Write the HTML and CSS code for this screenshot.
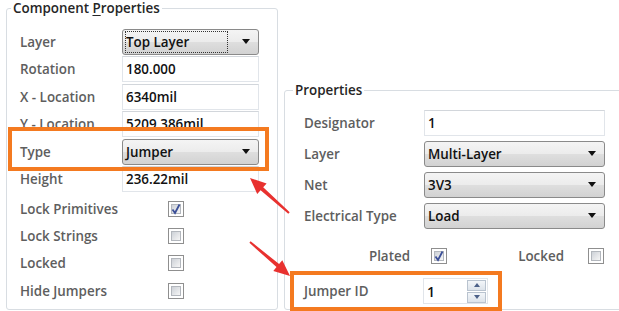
FILE: index.html
```html
<!DOCTYPE html>
<html lang="en">
<head>
    <meta charset="UTF-8">
    <title>Component Properties</title>
    <link rel="stylesheet" href="styles.css">
</head>
<body>
    <div class="page">
        <div class="left">
            <div class="group group-left">
                <div class="legend">Component <u>P</u>roperties</div>
                <div class="row">
                    <span class="label">Layer</span>
                    <div class="combo"><span class="focus">Top Layer</span><span class="caret"></span></div>
                </div>
                <div class="row">
                    <span class="label">Rotation</span>
                    <div class="field">180.000</div>
                </div>
                <div class="row">
                    <span class="label">X - Location</span>
                    <div class="field">6340mil</div>
                </div>
                <div class="row">
                    <span class="label">Y - Location</span>
                    <div class="field">5209.386mil</div>
                </div>
                <div class="row">
                    <span class="label">Type</span>
                    <div class="combo"><span>Jumper</span><span class="caret"></span></div>
                </div>
                <div class="row">
                    <span class="label">Height</span>
                    <div class="field">236.22mil</div>
                </div>
                <div class="checks">
                    <div class="check-row">
                        <span class="check-label">Lock Primitives</span>
                        <span class="box checked"><span class="inner"></span><svg viewBox="0 0 16 16"><path d="M4.5 8.5 L7 12 L11.5 3.5" fill="none" stroke="#3b4f98" stroke-width="1.8"/></svg></span>
                    </div>
                    <div class="check-row">
                        <span class="check-label">Lock Strings</span>
                        <span class="box"><span class="inner"></span></span>
                    </div>
                    <div class="check-row">
                        <span class="check-label">Locked</span>
                        <span class="box"><span class="inner"></span></span>
                    </div>
                    <div class="check-row">
                        <span class="check-label">Hide Jumpers</span>
                        <span class="box"><span class="inner"></span></span>
                    </div>
                </div>
            </div>
        </div>

        <div class="right">
            <div class="group group-right">
                <div class="legend">Properties</div>
                <div class="prow">
                    <span class="plabel">Designator</span>
                    <div class="field wide">1</div>
                </div>
                <div class="prow">
                    <span class="plabel">Layer</span>
                    <div class="combo wide"><span>Multi-Layer</span><span class="caret"></span></div>
                </div>
                <div class="prow">
                    <span class="plabel">Net</span>
                    <div class="combo wide"><span>3V3</span><span class="caret"></span></div>
                </div>
                <div class="prow">
                    <span class="plabel">Electrical Type</span>
                    <div class="combo wide"><span>Load</span><span class="caret"></span></div>
                </div>
                <div class="flags">
                    <span class="flag-plated">Plated</span>
                    <span class="box checked"><span class="inner"></span><svg viewBox="0 0 16 16"><path d="M4.5 8.5 L7 12 L11.5 3.5" fill="none" stroke="#3b4f98" stroke-width="1.8"/></svg></span>
                    <span class="flag-locked">Locked</span>
                    <span class="box"><span class="inner"></span></span>
                </div>
                <div class="jumper">
                    <span class="jlabel">Jumper ID</span>
                    <div class="spin">
                        <span>1</span>
                        <div class="spin-btns">
                            <span class="spin-btn up"></span>
                            <span class="spin-btn down"></span>
                        </div>
                    </div>
                </div>
            </div>
        </div>
    </div>

    <div class="highlight"></div>

    <svg class="arrows" viewBox="0 0 619 311" width="619" height="311">
        <polygon points="250,178 266.6,183.5 263.2,187.2 289.7,212.3 288.3,213.7 260.6,190.2 257.2,193.9" fill="#e8312f"/>
        <polygon points="290,276 282.3,260.3 279.1,264.1 250.6,241.2 249.4,242.8 276.5,267.1 273.3,270.9" fill="#e8312f"/>
    </svg>
</body>
</html>
```

FILE: styles.css
```css
*{
    margin: 0;
    padding: 0;
    box-sizing: border-box;
}

body{
    width: 619px;
    height: 311px;
    overflow: hidden;
    position: relative;
    background: #fff;
    font-family: "Open Sans", "Liberation Sans", sans-serif;
    font-size: 13.4px;
    font-weight: 600;
}

.page{
    display: flex;
    align-items: flex-start;
}

.left{
    width: 280px;
    padding: 8px 0 0 6px;
}

.right{
    padding: 90px 0 0 6px;
}

.group{
    border: 1px solid #d8dde2;
    border-radius: 3px;
}

.group-left{
    width: 272px;
    height: 302px;
    padding-left: 13px;
}

.group-right{
    width: 345px;
    height: 220px;
    padding-left: 19px;
}

.legend{
    width: fit-content;
    margin: -9px 0 12px -9px;
    padding: 0 2px;
    line-height: 16px;
    background: #fff;
    color: #262626;
}

.group-right .legend{
    margin: -9px 0 9px -11px;
}

.legend u{
    text-decoration-thickness: 1px;
    text-underline-offset: 2px;
}

.row{
    display: flex;
    align-items: center;
    height: 27.5px;
}

.label, .check-label{
    width: 102px;
    color: #5e5e5e;
}

.check-label{
    width: 148px;
}

.field, .combo{
    width: 137px;
    height: 26px;
    display: flex;
    align-items: center;
    color: #111;
}

.field{
    border: 1px solid #e1e5ea;
    border-top-color: #d2d6db;
    padding-left: 3px;
    background: #fff;
}

.combo{
    justify-content: space-between;
    border: 1px solid #8a8a8a;
    border-radius: 3px;
    padding: 0 8px 0 3px;
    background: linear-gradient(#f4f4f4, #ececec 48%, #dedede 52%, #d2d2d2);
}

.focus{
    flex: 1;
    height: 22px;
    line-height: 20px;
    margin: 0 14px 0 -1px;
    border: 1px dotted #333;
}

.caret{
    width: 0;
    height: 0;
    border-left: 4px solid transparent;
    border-right: 4px solid transparent;
    border-top: 5px solid #111;
}

.wide{
    width: 181px;
}

.checks{
    margin-top: 2px;
}

.check-row{
    display: flex;
    align-items: center;
    height: 27.3px;
}

.box{
    position: relative;
    width: 16px;
    height: 16px;
    padding: 2px;
    border: 1px solid #8f8f8f;
    background: #fff;
}

.box .inner{
    display: block;
    width: 10px;
    height: 10px;
    border: 1px solid #b3b7bd;
    background: linear-gradient(135deg, #cdd1d7, #f6f6f6);
}

.box svg{
    position: absolute;
    left: -1px;
    top: -1px;
    width: 16px;
    height: 16px;
}

.prow{
    display: flex;
    align-items: center;
    height: 31px;
}

.plabel{
    width: 120px;
    color: #5e5e5e;
}

.flags{
    display: flex;
    align-items: center;
    height: 16px;
    margin-top: 17px;
    color: #5e5e5e;
}

.flag-plated{
    width: 106px;
    margin-right: 21px;
    text-align: right;
}

.flag-locked{
    width: 117px;
    margin-right: 24px;
    text-align: right;
}

.jumper{
    display: flex;
    align-items: flex-start;
    width: 212px;
    height: 40px;
    margin: 7px 0 0 -14px;
    padding: 3px 0 0 10px;
    border: 4px solid #f47a20;
}

.jlabel{
    width: 119px;
    line-height: 26px;
    color: #5e5e5e;
}

.spin{
    display: flex;
    align-items: center;
    justify-content: space-between;
    width: 65px;
    height: 26px;
    padding: 0 1px 0 3px;
    border: 1px solid #e1e5ea;
    color: #111;
    font-size: 14px;
}

.spin-btns{
    display: flex;
    flex-direction: column;
    gap: 1px;
}

.spin-btn{
    display: flex;
    align-items: center;
    justify-content: center;
    width: 19px;
    height: 11px;
    border: 1px solid #b9c3cf;
    background: linear-gradient(#f3f6f9, #dde3ea);
}

.spin-btn::after{
    content: "";
    border-left: 3px solid transparent;
    border-right: 3px solid transparent;
}

.up::after{
    border-bottom: 4px solid #4c6088;
}

.down::after{
    border-top: 4px solid #4c6088;
}

.highlight{
    position: absolute;
    left: 8px;
    top: 127px;
    width: 261px;
    height: 44px;
    border: 4px solid #f47a20;
}

.arrows{
    position: absolute;
    left: 0;
    top: 0;
    pointer-events: none;
}
```
